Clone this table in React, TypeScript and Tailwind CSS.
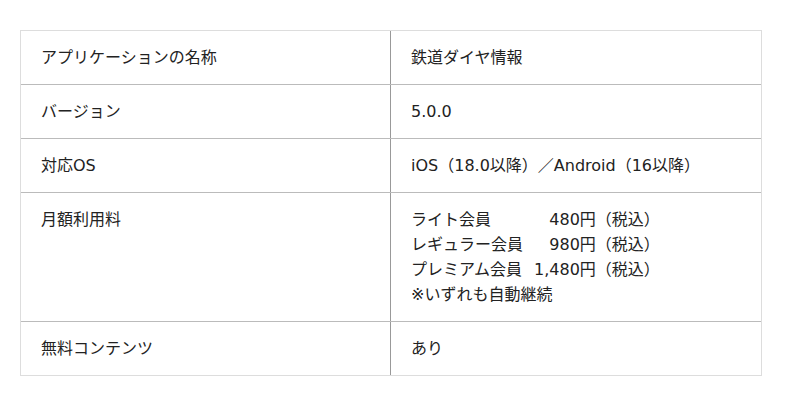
import React from 'react';

const rows: { label: string; value: React.ReactNode }[] = [
    { label: 'アプリケーションの名称', value: '鉄道ダイヤ情報' },
    { label: 'バージョン', value: '5.0.0' },
    { label: '対応OS', value: 'iOS（18.0以降）／Android（16以降）' },
    {
        label: '月額利用料',
        value: (
            <div>
                <div className="inline-grid grid-cols-[auto_auto] gap-x-[11px]">
                    <span>ライト会員</span>
                    <span className="text-right">480円（税込）</span>
                    <span>レギュラー会員</span>
                    <span className="text-right">980円（税込）</span>
                    <span>プレミアム会員</span>
                    <span className="text-right">1,480円（税込）</span>
                </div>
                <div>※いずれも自動継続</div>
            </div>
        ),
    },
    { label: '無料コンテンツ', value: 'あり' },
];

const App: React.FC = () => {
    return (
        <div className="w-[800px] h-[406px] bg-white pt-[30px] px-[20px] text-[#222] text-[16px] leading-[25px] font-['DejaVu_Sans','Noto_Sans_CJK_JP',sans-serif]">
            <div className="w-[742px] border border-[#ddd]">
                {rows.map((row, i) => (
                    <div key={row.label} className={`flex ${i > 0 ? 'border-t border-[#bbb]' : ''}`}>
                        <div className="w-[370px] shrink-0 border-r border-[#999] px-5 py-[14px]">{row.label}</div>
                        <div className="flex-1 px-5 py-[14px]">{row.value}</div>
                    </div>
                ))}
            </div>
        </div>
    );
};

export default App;
